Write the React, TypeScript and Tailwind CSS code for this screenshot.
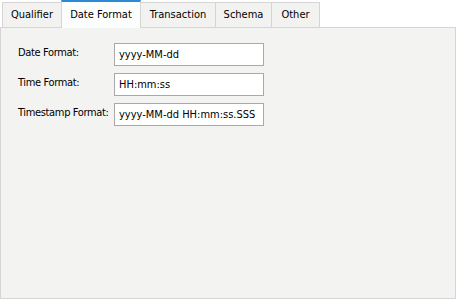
const tabs = [
  { label: "Qualifier", w: "w-[60px] border-l" },
  { label: "Date Format", w: "w-[80px]", active: true },
  { label: "Transaction", w: "w-[75px]" },
  { label: "Schema", w: "w-[56px]" },
  { label: "Other", w: "w-[48px]" },
];

const fields = [
  { label: "Date Format:", value: "yyyy-MM-dd" },
  { label: "Time Format:", value: "HH:mm:ss" },
  { label: "Timestamp Format:", value: "yyyy-MM-dd HH:mm:ss.SSS" },
];

const App = () => {
  return (
    <div className="w-[456px] h-[299px] bg-white flex flex-col text-[11px] text-black font-['DejaVu_Sans_Condensed','DejaVu_Sans',sans-serif]">
      <div className="flex items-end h-[28px] pl-[2px] border-b border-[#d5d5d5]">
        {tabs.map((t) =>
          t.active ? (
            <div
              key={t.label}
              className={`${t.w} -mb-px h-[28px] flex items-center justify-center bg-[#fcfdfd] border-t-2 border-t-[#2b8ad6] border-x border-x-[#d5d5d5] -ml-px`}
            >
              {t.label}
            </div>
          ) : (
            <div
              key={t.label}
              className={`${t.w} h-[25px] flex items-center justify-center bg-[#f2f3f0] border-t border-r border-[#d5d5d5]`}
            >
              {t.label}
            </div>
          )
        )}
      </div>
      <div className="flex-1 bg-[#f3f4f1] border-x border-b border-[#d5d5d5] pt-[15px] pl-[17px]">
        <div className="flex flex-col gap-[7px]">
          {fields.map((f) => (
            <div key={f.label} className="flex items-center">
              <span className="w-[96px] shrink-0 whitespace-nowrap tracking-[-0.35px] -mt-[2px]">{f.label}</span>
              <div className="w-[150px] h-[23px] shrink-0 bg-white border border-[#a9a9a9] flex items-center pl-[4px] pt-px whitespace-nowrap">
                {f.value}
              </div>
            </div>
          ))}
        </div>
      </div>
    </div>
  );
};

export default App;
